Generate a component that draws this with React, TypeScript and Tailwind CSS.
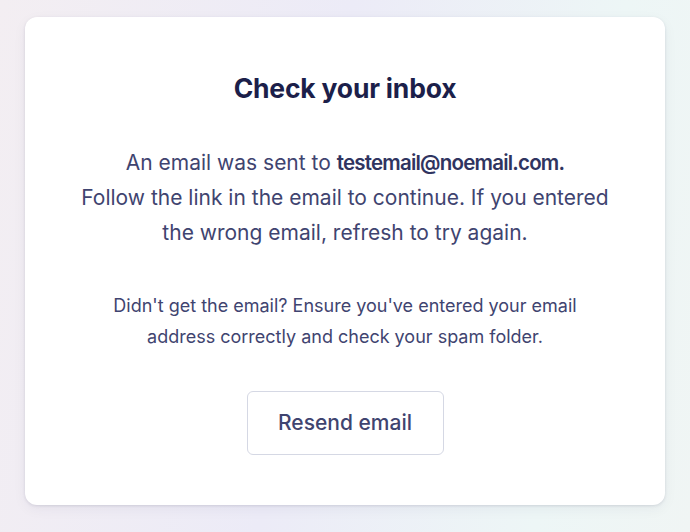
import React from "react";

export default function App() {
  return (
    <div
      className="w-[690px] h-[532px] overflow-hidden bg-[linear-gradient(100deg,#f3eef2_0%,#ecebf7_45%,#edf6f6_80%,#f0f5f4_100%)] pt-[17px] pl-[25px]"
      style={{ fontFamily: "Inter, 'Noto Sans', sans-serif" }}
    >
      <div className="w-[640px] h-[488px] bg-white rounded-[12px] shadow-[0_1px_3px_rgba(30,35,70,0.12),0_4px_14px_rgba(30,35,70,0.05)] flex flex-col items-center pt-[55px]">
        <h1 className="text-[26.5px] leading-[32px] font-bold text-[#1c1f4a] tracking-[-0.2px]">
          Check your inbox
        </h1>
        <p className="mt-[41px] text-[21px] leading-[35px] text-[#3f4470] text-center">
          An email was sent to{" "}
          <span className="font-semibold text-[20.5px] text-[#2f3460] tracking-[-0.8px]">testemail@noemail.com.</span>
          <br />
          Follow the link in the email to continue. If you entered
          <br />
          the wrong email, refresh to try again.
        </p>
        <p className="mt-[40px] text-[18px] leading-[31px] text-[#3f4470] text-center">
          Didn't get the email? Ensure you've entered your email
          <br />
          address correctly and check your spam folder.
        </p>
        <button className="mt-[39px] w-[197px] h-[64px] rounded-[6px] border border-[#d5d8e4] bg-white text-[21px] font-medium text-[#3f4470]">
          Resend email
        </button>
      </div>
    </div>
  );
}
